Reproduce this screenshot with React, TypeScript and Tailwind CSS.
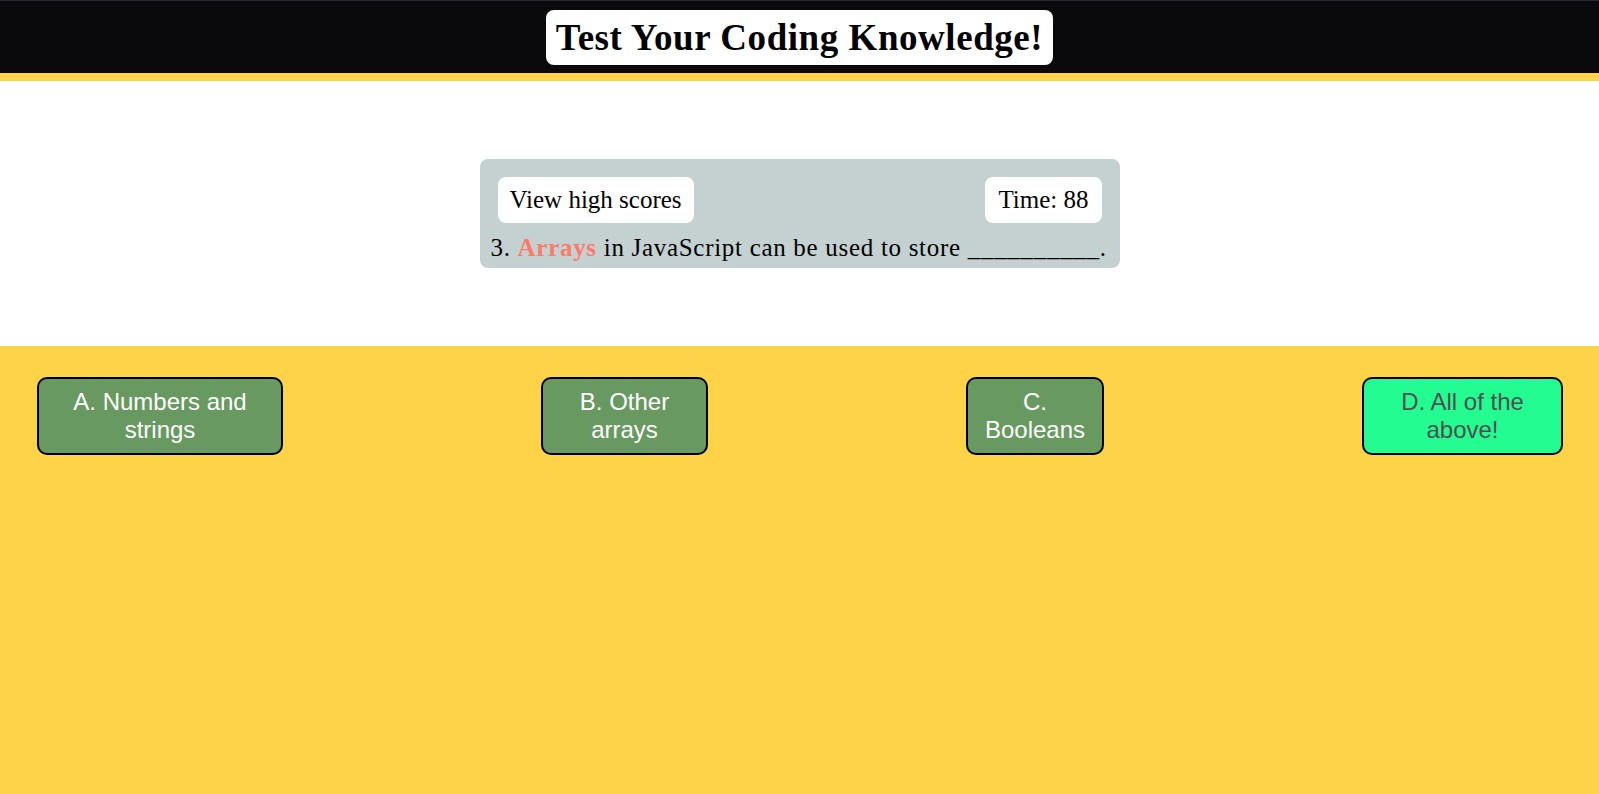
const serif = "font-['Liberation_Serif','Times_New_Roman',serif]";

const answers = [
  { label: "A. Numbers and strings", w: "w-[246px]", picked: false },
  { label: "B. Other arrays", w: "w-[167px]", picked: false },
  { label: "C. Booleans", w: "w-[138px]", picked: false },
  { label: "D. All of the above!", w: "w-[201px]", picked: true },
];

export default function App() {
  return (
    <div className="flex min-h-screen flex-col bg-[#fed347]">
      <header className="flex h-[73px] items-center justify-center border-t border-[#262733] bg-[#0a0a0c]">
        <h1
          className={`${serif} flex h-[55px] items-center rounded-[8px] bg-white px-[10px] text-[37px] font-bold leading-none tracking-[0.55px] text-black`}
        >
          Test Your Coding Knowledge!
        </h1>
      </header>
      <div className="h-[8px] bg-[#fed347]" />

      <main className="flex h-[265px] items-center justify-center bg-white">
        <section
          className={`${serif} flex w-[640px] flex-col rounded-[8px] bg-[#c5d1d1] px-[10px] pb-[5px] pt-[18px] text-black`}
        >
          <div className="flex items-center justify-between px-[8px]">
            <button className="flex h-[46px] items-center rounded-[8px] bg-white px-[12px] text-[25px]">
              View high scores
            </button>
            <div className="flex h-[46px] items-center rounded-[8px] bg-white px-[13px] text-[25px]">
              Time: 88
            </div>
          </div>
          <p className="mt-[11px] whitespace-nowrap pl-px text-[25px] leading-[1.15] tracking-[0.7px]">
            3. <strong className="font-bold text-[#fb7a6a]">Arrays</strong> in
            JavaScript can be used to store __________.
          </p>
        </section>
      </main>

      <div className="flex flex-1 items-start justify-between pl-[37px] pr-[36px] pt-[31px]">
        {answers.map((a) => (
          <button
            key={a.label}
            className={`${a.w} h-[78px] rounded-[10px] border-2 border-black px-[10px] text-center font-['Liberation_Sans',Arial,sans-serif] text-[24px] leading-[1.15] ${
              a.picked ? "bg-[#23fc91] text-[#4f4f4f]" : "bg-[#689960] text-white"
            }`}
          >
            {a.label}
          </button>
        ))}
      </div>
    </div>
  );
}
